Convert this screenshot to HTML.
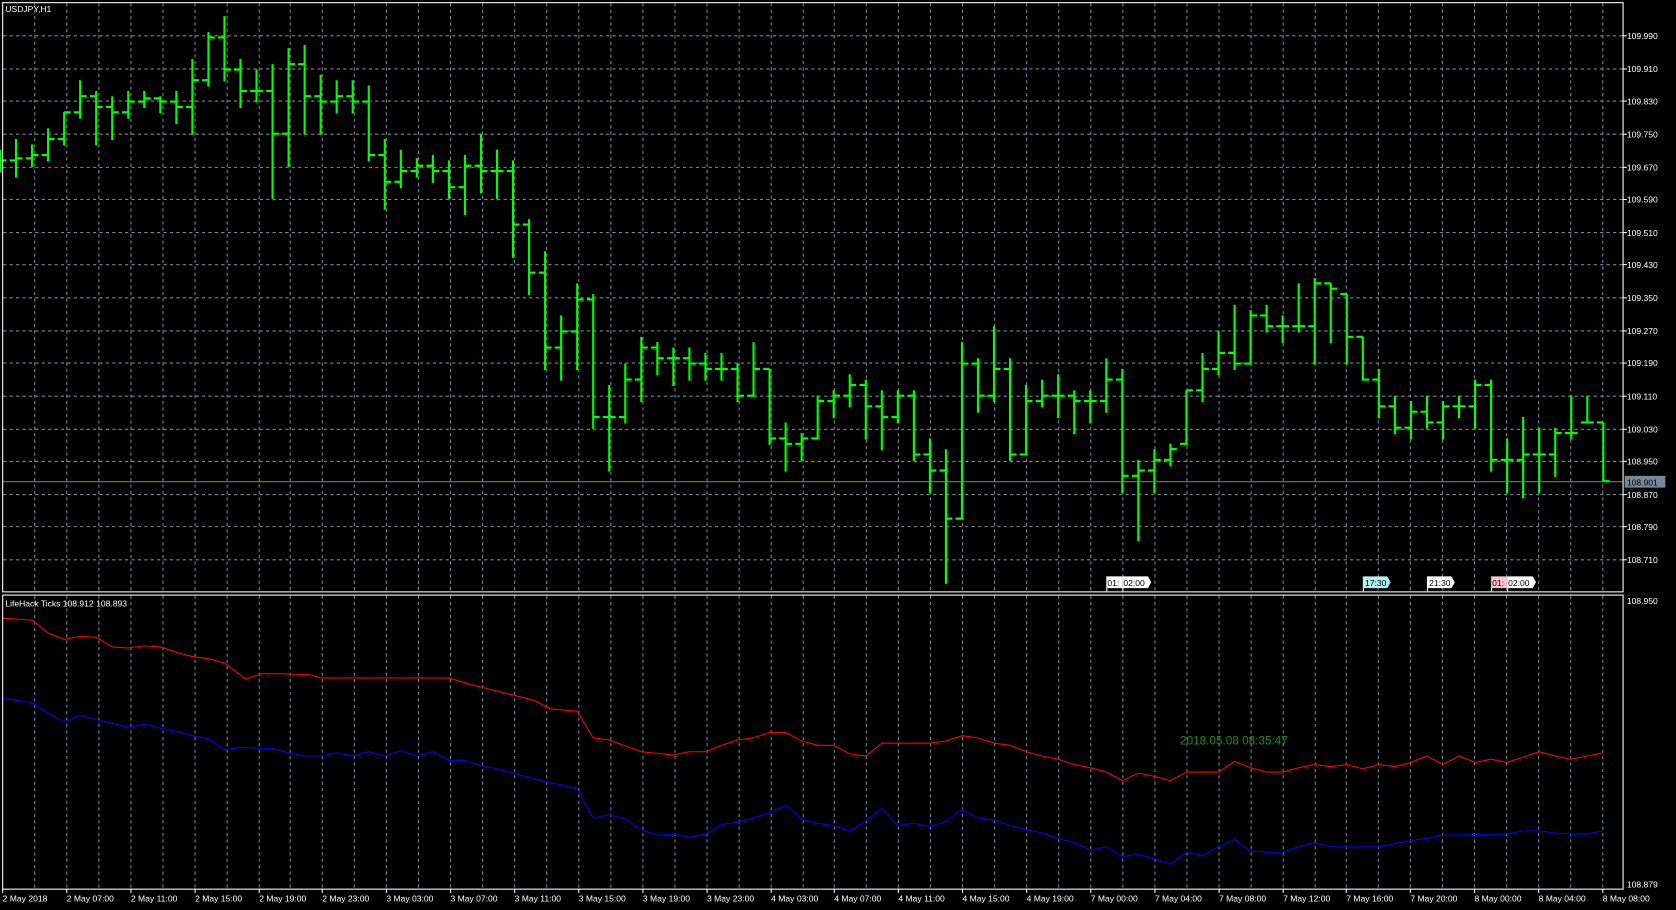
<!DOCTYPE html>
<html><head><meta charset="utf-8">
<style>
html,body{margin:0;padding:0;background:#000;width:1676px;height:910px;overflow:hidden}
svg{display:block}
text{font-family:"Liberation Sans","DejaVu Sans",sans-serif;font-size:8px;fill:#fff}
</style></head>
<body>
<svg id="s" width="1676" height="910" viewBox="0 0 1568 851" preserveAspectRatio="none" xmlns="http://www.w3.org/2000/svg">
<rect width="1568" height="851" fill="#000"/>
<g id="grid" stroke="#778899" stroke-width="1" stroke-dasharray="3,3"></g>
<g id="bars" stroke="#00ff00" stroke-width="2" fill="none"></g>
<line x1="2" y1="450.5" x2="1518" y2="450.5" stroke="#778899" stroke-width="1"/>
<g id="ind" fill="none" stroke-width="1"></g>
<rect x="2.5" y="2.5" width="1516" height="551" fill="none" stroke="#fff" stroke-width="1"/>
<rect x="2.5" y="556.5" width="1516" height="275" fill="none" stroke="#fff" stroke-width="1"/>
<g id="ax" stroke="#fff" stroke-width="1"></g>
<g id="lbl"></g>
<text x="5" y="11">USDJPY,H1</text>
<text x="5" y="567">LifeHack Ticks  108.912 108.893</text>
<text x="1104" y="696" style="fill:#1f8a1f;font-size:11px">2018.05.08 08:35:47</text>
<rect x="1520" y="445" width="38" height="11" fill="#778899"/>
<text x="1522" y="454" style="fill:#000">108.901</text>
<text x="1522" y="565">108.950</text>
<text x="1522" y="830">108.879</text>
<!-- time markers -->
<g>
<path d="M1035 539h15v11h-15z" fill="#fff"/><path d="M1050 539h24l3 5.5-3 5.5h-24z" fill="#fff"/>
<text x="1036" y="548" style="fill:#000">01:</text><text x="1051" y="548" style="fill:#000">02:00</text>
<path d="M1275 539h23l3 5.5-3 5.5h-23z" fill="#aff0f0"/><text x="1277" y="548" style="fill:#000">17:30</text>
<path d="M1335 539h23l3 5.5-3 5.5h-23z" fill="#fff"/><text x="1337" y="548" style="fill:#000">21:30</text>
<path d="M1395 539h15v11h-15z" fill="#ffc0cb"/><path d="M1410 539h24l3 5.5-3 5.5h-24z" fill="#fff"/>
<text x="1396" y="548" style="fill:#000">01:</text><text x="1411" y="548" style="fill:#000">02:00</text>
<g stroke="#fff"><line x1="1035.5" y1="550" x2="1035.5" y2="553"/><line x1="1050.5" y1="550" x2="1050.5" y2="553"/><line x1="1275.5" y1="550" x2="1275.5" y2="553"/><line x1="1335.5" y1="550" x2="1335.5" y2="553"/><line x1="1395.5" y1="550" x2="1395.5" y2="553"/><line x1="1410.5" y1="550" x2="1410.5" y2="553"/></g>
</g>
</svg>
<script>
var NS="http://www.w3.org/2000/svg";
function el(p,t,a,txt){var e=document.createElementNS(NS,t);for(var k in a)e.setAttribute(k,a[k]);if(txt)e.textContent=txt;p.appendChild(e);return e;}
var g=document.getElementById('grid'),ax=document.getElementById('ax'),lb=document.getElementById('lbl');
var prices=["109.990","109.910","109.830","109.750","109.670","109.590","109.510","109.430","109.350","109.270","109.190","109.110","109.030","108.950","108.870","108.790","108.710"];
for(var i=0;i<prices.length;i++){var y=Math.round(33+i*30.625)+0.5;
 el(g,'line',{x1:3,y1:y,x2:1518,y2:y});el(ax,'line',{x1:1518,y1:y,x2:1522,y2:y});
 el(lb,'text',{x:1522,y:y+3},prices[i]);}
for(var k=1;k<51;k++){var x=Math.round(2+k*29.94)+0.5;if(x>1517)break;
 el(g,'line',{x1:x,y1:3,x2:x,y2:553});el(g,'line',{x1:x,y1:557,x2:x,y2:831});}
var tl=["2 May 2018","2 May 07:00","2 May 11:00","2 May 15:00","2 May 19:00","2 May 23:00","3 May 03:00","3 May 07:00","3 May 11:00","3 May 15:00","3 May 19:00","3 May 23:00","4 May 03:00","4 May 07:00","4 May 11:00","4 May 15:00","4 May 19:00","7 May 00:00","7 May 04:00","7 May 08:00","7 May 12:00","7 May 16:00","7 May 20:00","8 May 00:00","8 May 04:00","8 May 08:00"];
for(var i=0;i<tl.length;i++){var x=Math.round(2+i*59.88)+0.5;el(ax,'line',{x1:x,y1:831,x2:x,y2:835});el(lb,'text',{x:x,y:843},tl[i]);}
// bars: high, low, close
var B=[[140,160,150],[130,165,148],[135,155,145],[120,150,130],[105,135,105],[75,110,90],[85,135,100],[90,130,105],[85,110,95],[85,100,92],[90,105,95],[85,115,100],[55,125,75],[30,80,35],[15,75,65],[55,100,85],[65,95,85],[60,185,125],[45,155,60],[42,125,90],[70,125,95],[75,105,90],[75,105,95],[80,150,145],[130,195,170],[140,175,160],[148,165,155],[145,170,160],[150,185,175],[145,200,155],[125,180,160],[140,185,160],[150,240,210],[205,275,255],[235,345,325],[295,355,310],[265,345,280],[275,400,390],[360,440,390],[340,395,355],[315,375,325],[320,350,335],[325,360,335],[325,355,340],[330,355,345],[330,355,345],[340,375,370],[320,370,345],[345,415,410],[395,440,415],[405,430,410],[370,410,375],[365,390,370],[350,380,360],[355,410,380],[365,420,390],[365,395,370],[365,430,425],[410,460,440],[420,545,485],[320,485,340],[335,385,370],[305,375,345],[335,430,425],[360,425,375],[355,380,370],[350,390,370],[365,405,375],[365,395,375],[335,385,355],[345,460,445],[430,505,440],[420,460,430],[415,435,420],[365,415,365],[330,375,345],[310,350,330],[285,345,340],[290,340,295],[285,310,305],[295,320,305],[265,310,305],[260,340,265],[265,320,270],[275,340,315],[315,355,355],[345,390,380],[370,405,400],[375,410,385],[370,400,395],[375,410,380],[370,390,380],[355,400,360],[355,440,430],[410,460,430],[390,465,425],[400,460,425],[400,445,405],[370,410,405],[370,395,395],[395,450,450]];
var bg=document.getElementById('bars'),N=B.length,prev=150,d="";
for(var i=0;i<N;i++){var x=1500-15*(N-1-i),b=B[i],o=Math.min(Math.max(prev,b[0]),b[1]);
 d+="M"+x+" "+b[0]+"V"+(b[1]+1)+"M"+(x-6)+" "+o+"H"+x+"M"+x+" "+b[2]+"H"+(x+6);prev=b[2];}
el(bg,'path',{d:d});
var R=[[2,578],[30,580],[45,592],[60,598],[75,595],[90,596],[105,605],[120,606],[135,604],[150,605],[165,610],[180,614],[195,616],[210,620],[230,635],[245,630],[260,630],[290,631],[300,634],[420,634],[440,640],[480,650],[500,655],[515,663],[540,665],[555,690],[570,692],[600,703],[630,706],[645,703],[660,703],[675,697],[690,692],[705,690],[720,685],[735,685],[750,693],[765,697],[780,697],[795,705],[810,707],[825,695],[870,695],[885,693],[900,688],[915,690],[930,695],[945,697],[960,703],[975,707],[990,710],[1005,715],[1020,718],[1035,722],[1050,730],[1065,723],[1080,726],[1095,730],[1110,722],[1140,722],[1155,712],[1170,718],[1185,722],[1200,722],[1215,718],[1230,715],[1245,717],[1260,715],[1275,719],[1290,715],[1305,717],[1320,713],[1335,707],[1350,715],[1365,707],[1380,713],[1395,710],[1410,713],[1425,708],[1440,703],[1455,707],[1470,710],[1485,707],[1500,704]];
var Bl=[[2,653],[30,657],[45,667],[60,675],[75,669],[90,673],[120,680],[135,677],[150,681],[165,684],[180,688],[195,691],[210,701],[225,699],[255,700],[270,704],[285,707],[300,707],[315,704],[330,707],[345,703],[360,707],[375,702],[390,707],[405,703],[420,711],[435,711],[450,716],[465,719],[480,723],[495,727],[510,731],[525,734],[540,738],[555,765],[570,762],[585,766],[600,776],[615,781],[630,780],[645,783],[660,780],[675,771],[690,769],[705,765],[720,760],[735,753],[750,766],[765,770],[780,772],[795,777],[810,768],[825,756],[840,772],[855,770],[870,773],[885,768],[900,757],[915,765],[930,767],[945,772],[960,776],[975,779],[990,784],[1005,788],[1020,795],[1035,792],[1050,801],[1065,799],[1080,803],[1095,808],[1110,797],[1125,800],[1140,792],[1155,785],[1170,796],[1185,797],[1200,797],[1215,792],[1230,788],[1245,792],[1290,792],[1305,789],[1320,786],[1335,784],[1350,781],[1410,780],[1425,777],[1440,777],[1455,779],[1470,780],[1485,780],[1500,777]];
var ig=document.getElementById('ind');
el(ig,'polyline',{points:R.map(function(p){return p.join(',')}).join(' '),stroke:'#ff0000'});
el(ig,'polyline',{points:Bl.map(function(p){return p.join(',')}).join(' '),stroke:'#0000ff'});
</script>
</body></html>
